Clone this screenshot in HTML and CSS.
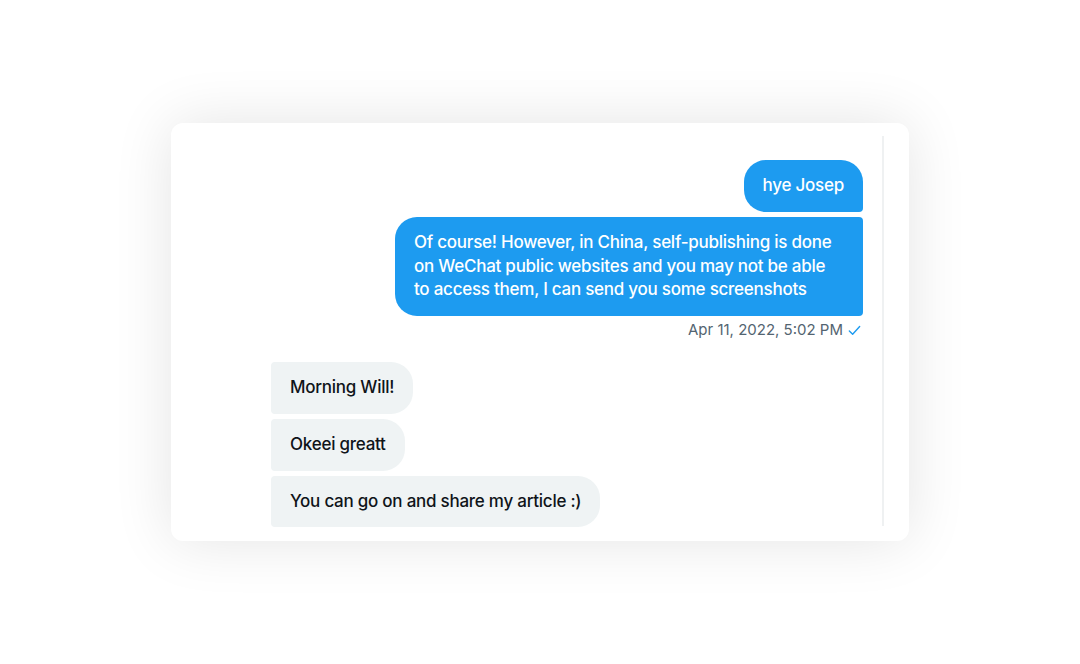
FILE: index.html
```html
<!DOCTYPE html>
<html>
<head>
<meta charset="utf-8">
<link rel="stylesheet" href="styles.css">
</head>
<body>
<div class="card">
  <div class="conversation">
    <div class="group sent">
      <div class="bubble sent first">hye Josep</div>
      <div class="bubble sent last wide">Of course! However, in China, self-publishing is done<br>on WeChat public websites and you may not be able<br>to access them, I can send you some screenshots</div>
      <div class="meta">Apr 11, 2022, 5:02 PM
        <svg class="check" viewBox="0 0 16 16" width="15" height="15"><path d="M2.5 8.6 L6 12 L13.5 3.8" fill="none" stroke="#1d9bf0" stroke-width="1.5" stroke-linecap="round" stroke-linejoin="round"/></svg>
      </div>
    </div>
    <div class="group received">
      <div class="bubble recv first">Morning Will!</div>
      <div class="bubble recv">Okeei greatt</div>
      <div class="bubble recv last">You can go on and share my article :)</div>
    </div>
  </div>
</div>
</body>
</html>
```

FILE: styles.css
```css
html, body {
  margin: 0;
  padding: 0;
  background: #ffffff;
}
body {
  width: 1080px;
  height: 664px;
  overflow: hidden;
  font-family: Inter, "Noto Sans", "Liberation Sans", sans-serif;
}
.card {
  margin: 123px 0 0 171px;
  width: 738px;
  height: 418px;
  box-sizing: border-box;
  background: #ffffff;
  border-radius: 12px;
  box-shadow: 0 0 60px rgba(0, 0, 0, 0.11);
  padding: 13px 25px 15px 0;
  display: flex;
}
.conversation {
  flex: 1;
  border-right: 2px solid #eff1f2;
  padding: 24px 19px 0 100px;
  display: flex;
  flex-direction: column;
}
.group {
  display: flex;
  flex-direction: column;
  gap: 5px;
}
.group.sent {
  align-items: flex-end;
}
.group.received {
  align-items: flex-start;
  margin-top: 22px;
  gap: 5px;
}
.bubble {
  font-size: 17px;
  font-weight: 450;
  line-height: 23.75px;
  padding: 14px 19px;
  letter-spacing: -0.25px;
}
.bubble.wide {
  width: 468px;
  box-sizing: border-box;
}
.bubble.sent {
  background: #1d9bf0;
  color: #ffffff;
}
.bubble.sent.first {
  border-radius: 22px 22px 4px 22px;
}
.bubble.sent.last {
  border-radius: 22px 4px 4px 22px;
}
.bubble.recv {
  background: #eff3f4;
  color: #0f1419;
  border-radius: 4px 22px 22px 4px;
}
.meta {
  display: flex;
  align-items: center;
  gap: 4px;
  font-size: 15px;
  color: #536471;
  margin-top: -1px;
  margin-right: 1px;
  line-height: 20px;
}
.check {
  display: block;
}
```
